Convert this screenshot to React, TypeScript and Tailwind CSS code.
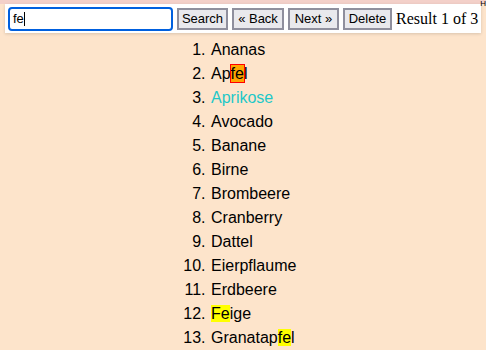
import React from 'react';

const fruits: { name: string; hit?: [number, number]; current?: boolean; visited?: boolean }[] = [
  { name: 'Ananas' },
  { name: 'Apfel', hit: [2, 4], current: true },
  { name: 'Aprikose', visited: true },
  { name: 'Avocado' },
  { name: 'Banane' },
  { name: 'Birne' },
  { name: 'Brombeere' },
  { name: 'Cranberry' },
  { name: 'Dattel' },
  { name: 'Eierpflaume' },
  { name: 'Erdbeere' },
  { name: 'Feige', hit: [0, 2] },
  { name: 'Granatapfel', hit: [8, 10] },
];

function Fruit({ f }: { f: (typeof fruits)[number] }) {
  if (!f.hit) {
    return <span className={f.visited ? 'text-[#1ec8c8]' : ''}>{f.name}</span>;
  }
  const [a, b] = f.hit;
  return (
    <span>
      {f.name.slice(0, a)}
      <mark
        className={
          f.current
            ? 'bg-[#ffa500] text-black outline outline-1 outline-[#ff0000]'
            : 'bg-[#ffff00] text-black'
        }
      >
        {f.name.slice(a, b)}
      </mark>
      {f.name.slice(b)}
    </span>
  );
}

function Btn({ children, w }: { children: React.ReactNode; w: string }) {
  return (
    <button
      className={`${w} shrink-0 h-[22px] bg-[#e9e9ed] border-2 border-[#8f8f9d] text-[13px] text-black flex items-center justify-center leading-none whitespace-nowrap`}
    >
      {children}
    </button>
  );
}

export default function App() {
  return (
    <div className="min-h-[350px] bg-[#fde4cb] relative overflow-hidden" style={{ fontFamily: '"Liberation Sans", sans-serif' }}>
      <div className="h-[4px] bg-[#f3d0c9]" />
      <span className="absolute top-0 right-0 text-[8px] leading-none text-black">H</span>

      {/* search toolbar */}
      <div className="mx-[5px] h-[29px] bg-white shadow-[0_1px_3px_rgba(0,0,0,0.15)] flex items-center px-[3px]">
        <div className="w-[165px] mr-[4px] shrink-0 h-[24px] border-2 border-[#0060df] rounded-[4px] flex items-center pl-[3px] text-[13px] text-black">
          fe<span className="w-px h-[14px] bg-black" />
        </div>
        <div className="flex items-center gap-[4px]">
          <Btn w="w-[51px]">Search</Btn>
          <Btn w="w-[52px]">« Back</Btn>
          <Btn w="w-[51px]">Next »</Btn>
          <Btn w="w-[49px]">Delete</Btn>
          <span className="text-[16px] text-black whitespace-nowrap" style={{ fontFamily: '"Liberation Serif", serif' }}>
            Result 1 of 3
          </span>
        </div>
      </div>

      <ol className="list-decimal ml-[170px] pl-10 mt-[5px] text-[16px] leading-6 text-black">
        {fruits.map((f) => (
          <li key={f.name} className="pl-[1px]">
            <Fruit f={f} />
          </li>
        ))}
      </ol>
    </div>
  );
}
